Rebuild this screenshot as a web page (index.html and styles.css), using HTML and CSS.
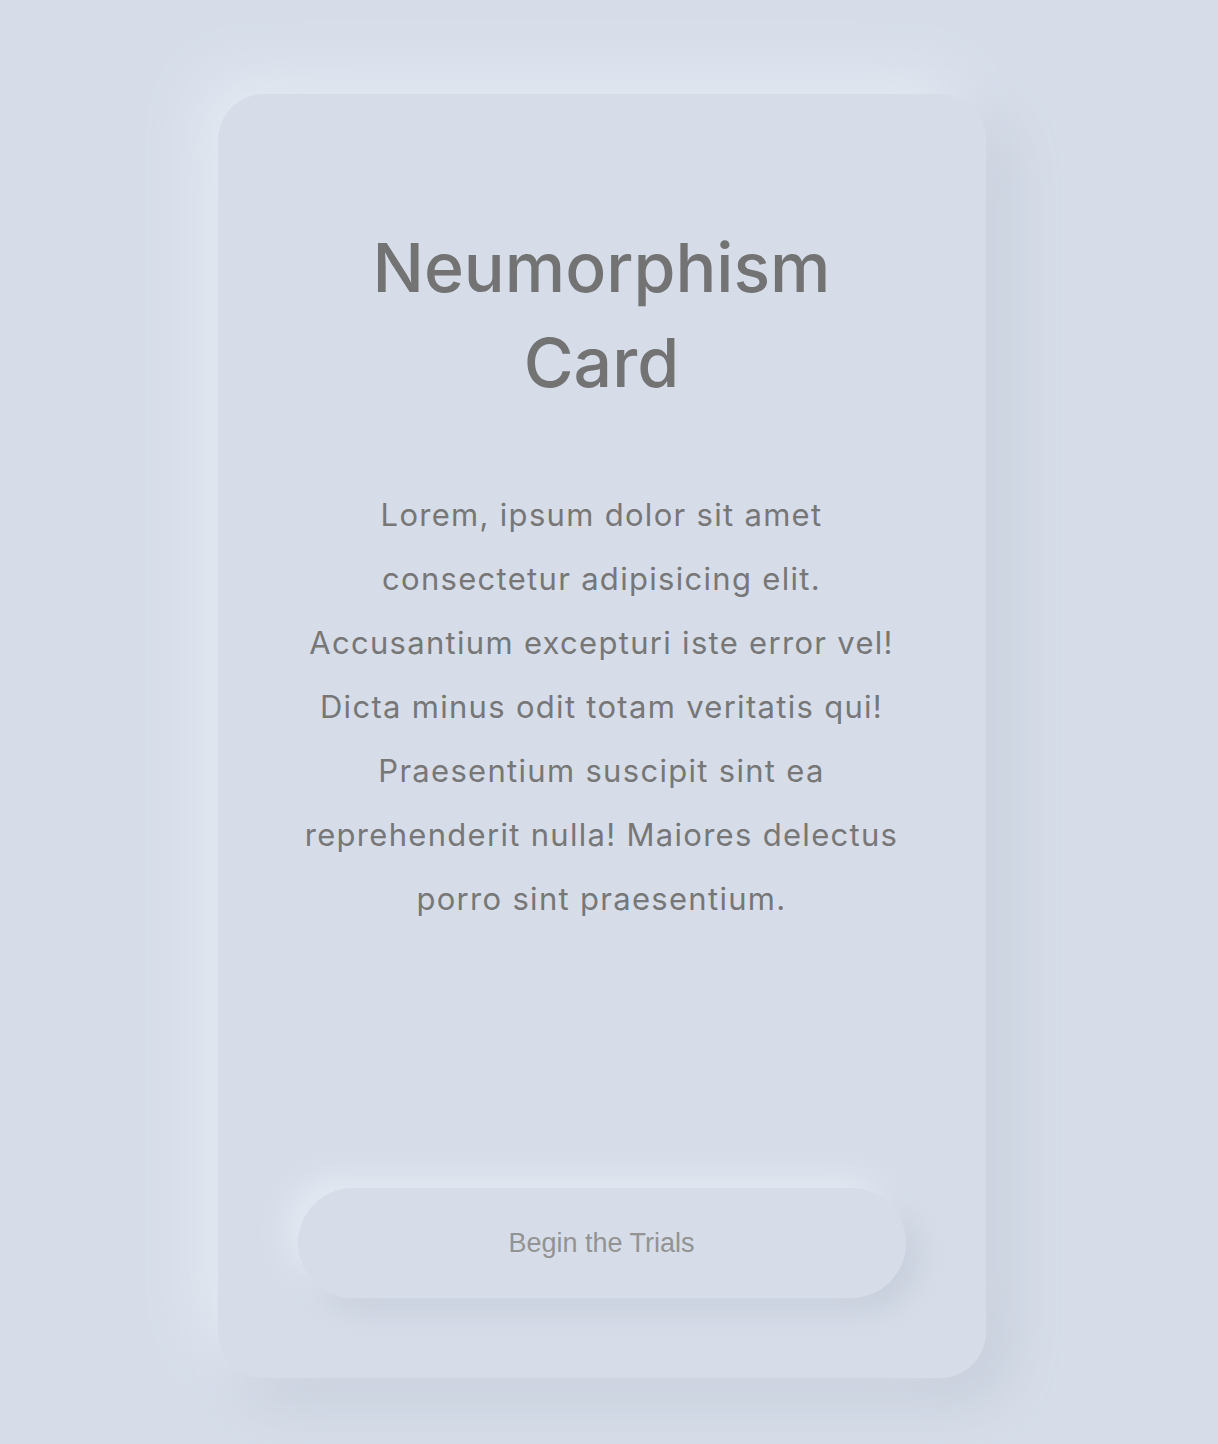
FILE: index.html
```html
<!DOCTYPE html>
<html lang="en">
<head>
<meta charset="utf-8">
<title>Neumorphism Card</title>
<link rel="stylesheet" href="styles.css">
</head>
<body>
<main class="page">
  <section class="card">
    <h1 class="card-title">Neumorphism<br>Card</h1>
    <p class="card-text">Lorem, ipsum dolor sit amet<br>consectetur adipisicing elit.<br>Accusantium excepturi iste error vel!<br>Dicta minus odit totam veritatis qui!<br>Praesentium suscipit sint ea<br>reprehenderit nulla! Maiores delectus<br>porro sint praesentium.</p>
    <button class="card-button" type="button">Begin the Trials</button>
  </section>
</main>
</body>
</html>
```

FILE: styles.css
```css
* {
  box-sizing: border-box;
}

html, body {
  margin: 0;
  padding: 0;
  background: #d6dde9;
}

.page {
  display: flex;
  justify-content: center;
  align-items: flex-start;
  padding: 94px 15px 66px 0;
  min-height: 1444px;
}

.card {
  width: 768px;
  min-height: 1284px;
  padding: 80px;
  border-radius: 46px;
  background: #d6dde9;
  box-shadow: -22px -22px 55px #e3e9f2, 22px 22px 55px #c6cdda;
  display: flex;
  flex-direction: column;
  align-items: center;
  text-align: center;
  font-family: "Inter", "Open Sans", sans-serif;
  color: #747474;
}

.card-title {
  margin: 46px 0 0;
  font-size: 68px;
  font-weight: 500;
  line-height: 95px;
  color: #737373;
}

.card-text {
  margin: 73px 0 0;
  font-size: 31px;
  font-weight: 400;
  line-height: 64px;
  letter-spacing: 1.3px;
  white-space: nowrap;
  color: #777777;
}

.card-button {
  margin-top: auto;
  width: 100%;
  height: 110px;
  border: none;
  border-radius: 55px;
  background: #d6dde9;
  box-shadow: -12px -12px 28px #e3e9f2, 12px 12px 28px #c6cdda;
  font-family: "Liberation Sans", Arial, sans-serif;
  font-size: 27px;
  color: #939393;
  cursor: pointer;
}
```
